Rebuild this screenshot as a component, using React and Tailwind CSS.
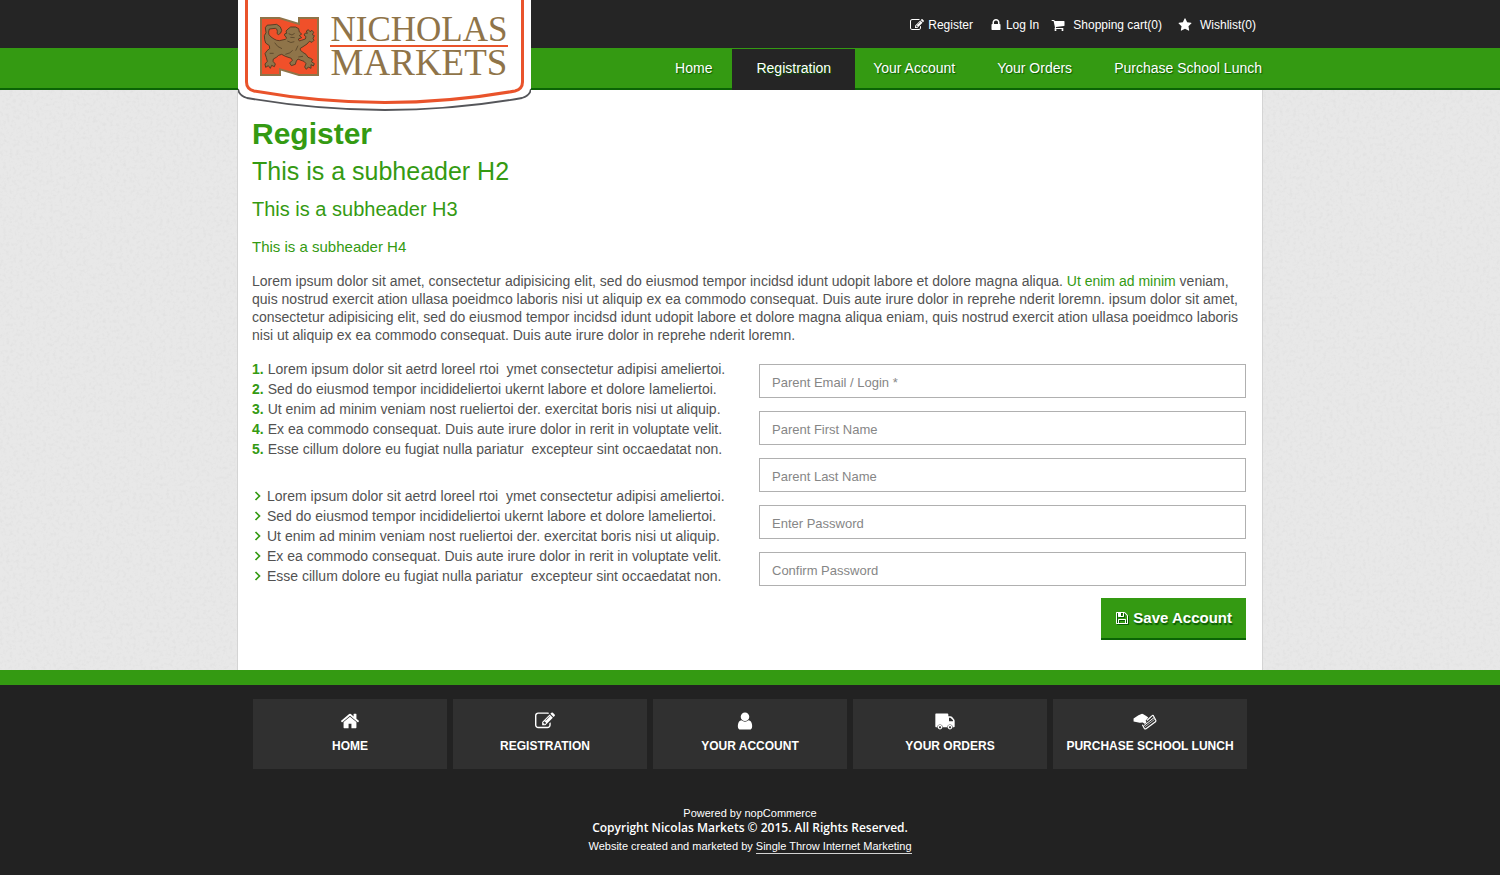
import React from "react";

const ICONS = {
  edit: "M888 1184l116-116-152-152-116 116v56h96v96h56zm440-720q-16-16-33 1l-350 350q-17 17-1 33t33-1l350-350q17-17 1-33zm80 594v190q0 119-84.5 203.5t-203.5 84.5h-832q-119 0-203.5-84.5t-84.5-203.5v-832q0-119 84.5-203.5t203.5-84.5h832q63 0 117 25 15 7 18 23 3 17-9 29l-49 49q-14 14-32 8-23-6-45-6h-832q-66 0-113 47t-47 113v832q0 66 47 113t113 47h832q66 0 113-47t47-113v-126q0-13 9-22l64-64q15-15 35-7t20 29zm-96-738l288 288-672 672h-288v-288zm444 132l-92 92-288-288 92-92q28-28 68-28t68 28l152 152q28 28 28 68t-28 68z",
  lock: "M640 768h512v-192q0-106-75-181t-181-75-181 75-75 181v192zm832 96v576q0 40-28 68t-68 28h-960q-40 0-68-28t-28-68v-576q0-40 28-68t68-28h32v-192q0-184 132-316t316-132 316 132 132 316v192h32q40 0 68 28t28 68z",
  cart: "M704 1536q0 52-38 90t-90 38-90-38-38-90 38-90 90-38 90 38 38 90zm896 0q0 52-38 90t-90 38-90-38-38-90 38-90 90-38 90 38 38 90zm128-1088v512q0 24-16.5 42.5t-40.5 21.5l-1044 122q13 60 13 70 0 16-24 64h920q26 0 45 19t19 45-19 45-45 19h-1024q-26 0-45-19t-19-45q0-11 8-31.5t16-36 21.5-40 15.5-29.5l-177-823h-204q-26 0-45-19t-19-45 19-45 45-19h256q16 0 28.5 6.5t19.5 15.5 13 24.5 8 26 5.5 29.5 4.5 26h1201q26 0 45 19t19 45z",
  star: "M1728 647q0 22-26 48l-363 354 86 500q1 7 1 20 0 21-10.5 35.5t-30.5 14.5q-19 0-40-12l-449-236-449 236q-22 12-40 12-21 0-31.5-14.5t-10.5-35.5q0-6 2-20l86-500-364-354q-25-27-25-48 0-37 56-46l502-73 225-455q19-41 49-41t49 41l225 455 502 73q56 9 56 46z",
  save: "M512 1536h768v-384h-768v384zm896 0h128v-896q0-14-10-38.5t-20-34.5l-281-281q-10-10-34-20t-39-10v416q0 40-28 68t-68 28h-576q-40 0-68-28t-28-68v-416h-128v1280h128v-416q0-40 28-68t68-28h832q40 0 68 28t28 68v416zm-384-928v-320q0-13-9.5-22.5t-22.5-9.5h-192q-13 0-22.5 9.5t-9.5 22.5v320q0 13 9.5 22.5t22.5 9.5h192q13 0 22.5-9.5t9.5-22.5zm640 32v928q0 40-28 68t-68 28h-1344q-40 0-68-28t-28-68v-1344q0-40 28-68t68-28h928q40 0 88 20t76 48l280 280q28 28 48 76t20 88z",
  home: "M1472 992v480q0 26-19 45t-45 19h-384v-384h-256v384h-384q-26 0-45-19t-19-45v-480q0-1 .5-3t.5-3l575-474 575 474q1 2 1 6zm223-69l-62 74q-8 9-21 11h-3q-13 0-21-7l-692-577-692 577q-12 8-24 7-13-2-21-11l-62-74q-8-10-7-23.5t11-21.5l719-599q32-26 76-26t76 26l244 204v-195q0-14 9-23t23-9h192q14 0 23 9t9 23v408l219 182q10 8 11 21.5t-7 23.5z",
  user: "M1536 1399q0 109-62.5 187t-150.5 78h-854q-88 0-150.5-78t-62.5-187q0-85 8.5-160.5t31.5-152 58.5-131 94-89 134.5-34.5q131 128 313 128t313-128q76 0 134.5 34.5t94 89 58.5 131 31.5 152 8.5 160.5zm-256-887q0 159-112.5 271.5t-271.5 112.5-271.5-112.5-112.5-271.5 112.5-271.5 271.5-112.5 271.5 112.5 112.5 271.5z",
};

function Icon({ name, className }) {
  return (
    <svg viewBox="0 0 1792 1792" fill="currentColor" aria-hidden="true" className={className}>
      <path d={ICONS[name]} />
    </svg>
  );
}

function AngleIcon() {
  return (
    <svg viewBox="0 0 12 12" fill="none" aria-hidden="true" className="h-3 w-3 shrink-0 text-[#349a12]">
      <path d="M3.500 2L7.500 6L3.500 10" stroke="currentColor" strokeWidth="1.700" />
    </svg>
  );
}

function TruckIcon() {
  return (
    <svg viewBox="0 0 60 50" fill="currentColor" aria-hidden="true" className="h-[17px] w-5">
      <path
        fillRule="evenodd"
        d="M3 1H37Q40 1 40 4V9H46Q49 9 51 11L57 18Q59 20 59 24V38Q60 42 57 42H53A8 8 0 0 0 37 42H23A8 8 0 0 0 7 42H3Q1 42 1 39V3Q1 1 3 1ZM42 14V24H54V21L48 15Q47 14 46 14Z"
      />
      <path fillRule="evenodd" d="M15 35A7 7 0 1 1 14.900 35ZM15 39A3 3 0 1 0 15.100 39Z" />
      <path fillRule="evenodd" d="M45 35A7 7 0 1 1 44.900 35ZM45 39A3 3 0 1 0 45.100 39Z" />
    </svg>
  );
}

function PayIcon() {
  return (
    <svg viewBox="0 0 72 52" fill="none" aria-hidden="true" className="h-[17px] w-6">
      <path
        d="M1 17L16 7 25 3Q28 2 31 4L41 10 46 14 38 24 41 28 36 34 29 29 20 30 1 26Z"
        fill="currentColor"
      />
      <path
        d="M42 23L58 8Q60 6 62 9L69 22Q70 25 68 27L39 48Q36 50 34 47L28 36"
        stroke="currentColor"
        strokeWidth="3.5"
      />
      <path d="M32 39L64 14" stroke="currentColor" strokeWidth="3" />
      <path d="M36 42L66 19" stroke="currentColor" strokeWidth="2" />
    </svg>
  );
}

function Texture({ id, className, matrix, frequency }) {
  return (
    <svg aria-hidden="true" className={className}>
      <filter id={id} x="0" y="0" width="100%" height="100%">
        <feTurbulence type="fractalNoise" baseFrequency={frequency} numOctaves="3" seed="4" />
        <feColorMatrix values={matrix} />
      </filter>
      <rect width="100%" height="100%" filter={`url(#${id})`} />
    </svg>
  );
}

function Logo() {
  return (
    <a
      href="#home"
      aria-label="Nicholas Markets"
      className="absolute left-0 top-0 z-10 block h-[112px] w-[293px] text-[#8f7449]"
    >
      <svg viewBox="0 0 293 112" fill="none" aria-hidden="true" className="absolute inset-0 h-full w-full">
        <path d="M0 0H293V90Q293 97 286 99Q147 121 7 99Q0 97 0 90Z" fill="#fff" />
        <path d="M0 89Q1 96 9 98Q147 122 284 98Q292 96 293 89" stroke="#55565a" strokeWidth="1.800" />
        <path d="M8.500 0V82Q8.500 89 16 91Q147 114 277 91Q284.500 89 284.500 82V0" stroke="#e9532b" strokeWidth="3" />
      </svg>
      <span className="relative flex items-center gap-[11px] pl-[22px] pt-[15px]">
        <svg viewBox="90 48 177 177" aria-hidden="true" className="h-[59px] w-[59px] shrink-0">
          <path
            d="M93 51H148L207 69V51H264V222H207L150 205V222H93Z"
            fill="#f0502a"
            stroke="#8f7449"
            strokeWidth="6"
          />
          <path
            d="M106 80Q110 69 120 72L140 70Q154 76 155 88Q154 98 145 101Q139 99 142 92Q143 84 136 82L118 84Q114 94 117 101Q121 108 132 114Q140 119 148 119L166 115Q172 112 168 108L163 102Q164 96 170 97L168 90L174 84L182 78L197 78L206 83L208 93L215 99L208 104L215 110L205 114L208 120L214 118L226 114L228 107L222 102L226 96L232 97L229 90L235 86L240 92L246 88L251 94L247 101L253 104L249 112L252 118L246 124L238 121L231 129L219 137L211 142L211 147L217 153L228 160L234 169L242 172L248 176L244 182L253 188L250 195L243 191L243 202L235 198L229 205L224 198L228 188L222 181L213 178L204 174L199 180L196 190L184 194L179 186L187 178L184 172L166 166L155 160L146 163L139 169L130 174L129 181L136 189L133 197L125 193L121 202L115 194L107 199L105 189L112 181L109 170L105 158L111 149L119 143L118 134L107 126L104 116L103 104L108 95Z"
            fill="#8f7449"
            stroke="#473620"
            strokeWidth="2.500"
            strokeLinejoin="round"
          />
          <path
            d="M176 98L186 102L194 97M181 109L194 110M172 120Q183 128 193 122M134 125Q142 139 156 143M166 160Q182 157 188 148M204 134L197 149M119 157L131 157M205 168L219 166"
            fill="none"
            stroke="#473620"
            strokeWidth="2"
          />
        </svg>
        <span className="flex w-[178px] flex-col items-center font-['Liberation_Serif',serif]">
          <span className="block text-[35px] leading-[30px]">NICHOLAS</span>
          <span className="block h-[2px] w-full bg-[#e9532b]" />
          <span className="block text-[37px] leading-[31px]">MARKETS</span>
        </span>
      </span>
    </a>
  );
}

const LINES = [
  "Lorem ipsum dolor sit aetrd loreel rtoi\u00a0 ymet consectetur adipisi ameliertoi.",
  "Sed do eiusmod tempor incidideliertoi ukernt labore et dolore lameliertoi.",
  "Ut enim ad minim veniam nost rueliertoi der. exercitat boris nisi ut aliquip.",
  "Ex ea commodo consequat. Duis aute irure dolor in rerit in voluptate velit.",
  "Esse cillum dolore eu fugiat nulla pariatur\u00a0 excepteur sint occaedatat non.",
];

const FIELDS = [
  { id: "email", label: "Parent Email / Login *", type: "text" },
  { id: "first", label: "Parent First Name", type: "text" },
  { id: "last", label: "Parent Last Name", type: "text" },
  { id: "password", label: "Enter Password", type: "password" },
  { id: "confirm", label: "Confirm Password", type: "password" },
];

const TILES = [
  { label: "Home", icon: <Icon name="home" className="h-5 w-5" />, tile: "", mark: "" },
  { label: "Registration", icon: <Icon name="edit" className="h-5 w-5" />, tile: "pr-[10px]", mark: "" },
  { label: "Your Account", icon: <Icon name="user" className="h-5 w-5" />, tile: "", mark: "pr-[10px]" },
  { label: "Your Orders", icon: <TruckIcon />, tile: "", mark: "pr-[10px]" },
  { label: "Purchase School Lunch", icon: <PayIcon />, tile: "", mark: "pr-[10px]" },
];

function Header() {
  return (
    <header className="relative z-10 bg-[#252525]">
      <div className="relative mx-auto max-w-[1024px]">
        <Logo />
        <nav aria-label="Account" className="flex h-12 items-center justify-end pr-[6px] pt-[2px] text-xs text-white">
          <a href="#register" className="flex items-center gap-1">
            <Icon name="edit" className="h-[14px] w-[14px]" />
            Register
          </a>
          <a href="#login" className="ml-4 flex items-center gap-[3px]">
            <Icon name="lock" className="h-[14px] w-[14px]" />
            Log In
          </a>
          <a href="#cart" className="ml-3 flex items-center gap-[8px]">
            <Icon name="cart" className="h-[14px] w-[14px]" />
            Shopping cart(0)
          </a>
          <a href="#wishlist" className="ml-4 flex items-center gap-[8px]">
            <Icon name="star" className="h-[14px] w-[14px]" />
            Wishlist(0)
          </a>
        </nav>
      </div>
      <div className="border-b-2 border-[#0b6405] bg-[#349a12]">
        <nav
          aria-label="Main"
          className="mx-auto flex h-10 max-w-[1024px] items-stretch justify-end text-sm text-white [text-shadow:1px_1px_1px_#0b5a05]"
        >
          <a href="#home" className="flex items-center px-5">Home</a>
          <a href="#registration" aria-current="page" className="mt-px -mb-[2px] flex items-center bg-[#252525] px-6 pb-[3px]">
            Registration
          </a>
          <a href="#account" className="flex items-center pl-[18px] pr-[21px]">Your Account</a>
          <a href="#orders" className="flex items-center px-[21px]">Your Orders</a>
          <a href="#lunch" className="flex items-center pl-[21px]">Purchase School Lunch</a>
        </nav>
      </div>
    </header>
  );
}

export default function App() {
  return (
    <div className="flex min-h-screen flex-col bg-[#222] font-['Liberation_Sans',Arial,sans-serif]">
      <Header />
      <div className="relative bg-[#e8e8e8]">
        <Texture
          id="plaster"
          frequency="0.3"
          className="absolute inset-0 h-full w-full"
          matrix="0 0 0 0 0.5  0 0 0 0 0.5  0 0 0 0 0.5  0.35 0 0 0 -0.16"
        />
        <main className="relative mx-auto box-content max-w-[1024px] border-x border-[#d4d4d4] bg-white">
          <div className="pb-[30px] pl-[14px] pr-4 pt-[26px]">
            <div className="text-[#349a12]">
              <h1 className="text-3xl leading-9 font-bold">Register</h1>
              <h2 className="mt-1 text-[25px] leading-[30px]">This is a subheader H2</h2>
              <h3 className="mt-[11px] text-xl leading-6">This is a subheader H3</h3>
              <h4 className="mt-[17px] text-[15px] leading-[18px]">This is a subheader H4</h4>
            </div>
            <p className="mt-4 text-sm leading-[18px] text-[#525252]">
              Lorem ipsum dolor sit amet, consectetur adipisicing elit, sed do eiusmod tempor incidsd idunt udopit labore
              et dolore magna aliqua. <a href="#more" className="text-[#349a12]">Ut enim ad minim</a> veniam, quis nostrud
              exercit ation ullasa poeidmco laboris nisi ut aliquip ex ea commodo consequat. Duis aute irure dolor in
              reprehe nderit loremn. ipsum dolor sit amet, consectetur adipisicing elit, sed do eiusmod tempor incidsd
              idunt udopit labore et dolore magna aliqua eniam, quis nostrud exercit ation ullasa poeidmco laboris nisi ut
              aliquip ex ea commodo consequat. Duis aute irure dolor in reprehe nderit loremn.
            </p>
            <div className="mt-[15px] grid grid-cols-1 gap-5 md:grid-cols-2">
              <div className="text-sm leading-5 text-[#525252]">
                <ol>
                  {LINES.map((line, i) => (
                    <li key={line} className="flex gap-1">
                      <span className="font-bold text-[#349a12]">{i + 1}.</span>
                      {line}
                    </li>
                  ))}
                </ol>
                <ul className="mt-[27px]">
                  {LINES.map((line) => (
                    <li key={line} className="flex items-center gap-[3px]">
                      <AngleIcon />
                      {line}
                    </li>
                  ))}
                </ul>
              </div>
              <form className="flex flex-col gap-[13px] pt-[5px]" onSubmit={(e) => e.preventDefault()}>
                {FIELDS.map((f) => (
                  <input
                    key={f.id}
                    id={f.id}
                    type={f.type}
                    aria-label={f.label}
                    placeholder={f.label}
                    className="h-[34px] w-full border border-[#b0b0b0] bg-white px-3 pt-[3px] text-[13px] text-[#4a4a4a] placeholder:text-[#868686]"
                  />
                ))}
                <button
                  type="submit"
                  className="-mt-px flex h-[42px] items-center gap-1 self-end border-b-2 border-[#0b6405] bg-[#349a12] px-[14px] text-[15px] font-bold text-white [text-shadow:1px_2px_1px_#0b5a05]"
                >
                  <Icon name="save" className="h-[14px] w-[14px] drop-shadow-[1px_1px_0_#0b5a05]" />
                  Save Account
                </button>
              </form>
            </div>
          </div>
        </main>
      </div>
      <footer className="flex-1 border-t-[15px] border-[#349a12] bg-[#222] text-white">
        <div className="mx-auto max-w-[1024px] px-[15px] pb-5 pt-[14px]">
          <nav aria-label="Footer" className="grid grid-cols-5 gap-[6px]">
            {TILES.map((t) => (
              <a
                key={t.label}
                href="#top"
                className={`flex h-[70px] flex-col items-center bg-[#303030] pt-3 text-xs font-bold uppercase ${t.tile}`}
              >
                <span className={`flex h-5 items-center ${t.mark}`}>{t.icon}</span>
                <span className="mt-[7px] whitespace-nowrap">{t.label}</span>
              </a>
            ))}
          </nav>
          <div className="mt-9 flex flex-col items-center text-[11px]">
            <p className="leading-4">Powered by nopCommerce</p>
            <p className="font-['Open_Sans',sans-serif] text-xs leading-[14px] font-semibold">
              Copyright Nicolas Markets © 2015. All Rights Reserved.
            </p>
            <p className="mt-1 leading-[14px]">
              Website created and marketed by{" "}
              <a href="#credit" className="inline-block border-b border-white/80">Single Throw Internet Marketing</a>
            </p>
          </div>
        </div>
      </footer>
    </div>
  );
}
